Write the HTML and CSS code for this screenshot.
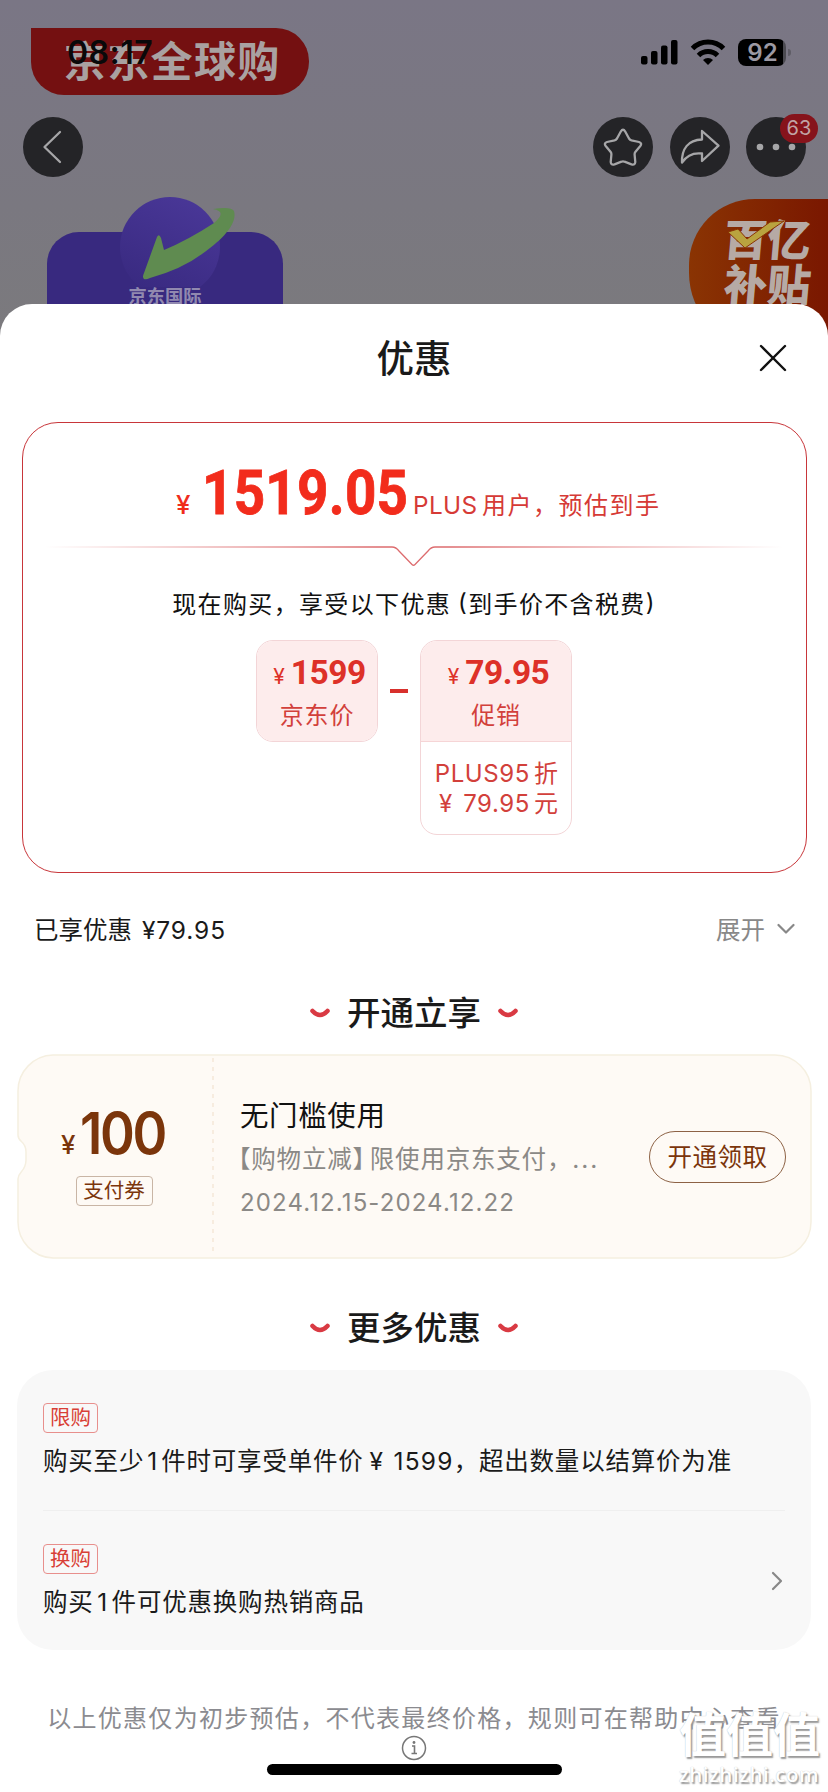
FILE: index.html
```html
<!DOCTYPE html>
<html lang="zh-CN">
<head>
<meta charset="utf-8">
<title>优惠</title>
<link rel="stylesheet" href="styles.css">
</head>
<body>
<div class="phone">
  <header class="hero">
    <div class="brand"><span>京东全球购</span></div>
    <div class="status">
      <span class="time">08:17</span>
      <div class="status-icons">
        <svg width="37" height="26" viewBox="0 0 37 26"><rect x="0" y="17" width="6.5" height="8.5" rx="2"/><rect x="10" y="12" width="6.5" height="13.5" rx="2"/><rect x="20" y="6.500" width="6.500" height="19" rx="2"/><rect x="30" y="1" width="6.500" height="24.500" rx="2"/></svg>
        <svg width="36" height="26" viewBox="0 0 36 26" fill="none" stroke="#000" stroke-width="5"><path d="M2.500 9.500a22 22 0 0 1 31 0"/><path d="M8.500 16.500a13.500 13.500 0 0 1 19 0"/><path d="M18 26l-5-5a7 7 0 0 1 10 0z" fill="#000" stroke="none"/></svg>
        <span class="battery">92</span>
      </div>
    </div>
    <nav class="nav">
      <span class="round"><svg width="60" height="60" viewBox="0 0 60 60"><path d="M37 15L21.500 30L37 45"/></svg></span>
      <span class="round push"><svg width="60" height="60" viewBox="0 0 60 60"><path d="M27.800 14.500Q30 11 32.200 14.500L36 21.500Q37 23 38.500 23.400L46 25Q49.500 26.200 47.300 29L42.300 35Q41.500 36 41.600 37.500L42.300 45Q42 48.500 38.500 47.300L31.500 44.700Q30 44 28.500 44.700L21.500 47.300Q18 48.500 17.700 45L18.400 37.500Q18.500 36 17.700 35L12.700 29Q10.500 26.200 14 25L21.500 23.400Q23 23 24 21.500Z"/></svg></span>
      <span class="round"><svg width="60" height="60" viewBox="0 0 60 60"><path d="M32 14L48.500 28.700L32 44V36.500C24 35.500 17 38 12 45.500C11.500 32 18 23 32 22.500Z"/></svg></span>
      <span class="round"><svg class="dots" width="60" height="60" viewBox="0 0 60 60"><circle cx="14" cy="30" r="3.300"/><circle cx="30" cy="30" r="3.300"/><circle cx="46" cy="30" r="3.300"/></svg><b class="count">63</b></span>
    </nav>
    <div class="promos">
      <div class="intl">
        <svg class="intl-logo" width="130" height="90" viewBox="0 0 130 90"><defs><linearGradient id="orb" x1=".7" y1="0" x2=".2" y2="1"><stop offset="0" stop-color="#493797"/><stop offset="1" stop-color="#38297f"/></linearGradient></defs><circle cx="50" cy="50" r="50" fill="url(#orb)"/><path d="M24 82Q22 80 24 76L37 40Q39 36 41 41L44 53Q68 43 94 26C102 19 104 14 93 12Q111 9 114 14C118 28 99 45 82 57Q62 72 30 81Q26 83 24 82Z" fill="#5f8b50"/></svg>
        <span>京东国际</span>
      </div>
      <div class="subsidy">
        <span>百亿</span><span>补贴</span>
        <svg class="tick" width="56" height="30" viewBox="0 0 56 30"><path d="M0 12L10 9L19 19L42 2L56 1L17 28Z" fill="#b9a33f" stroke="#8a3404"/></svg>
      </div>
    </div>
  </header>

  <main class="sheet">
    <div class="title-bar"><h1>优惠</h1>
      <svg class="close" width="28" height="28" viewBox="0 0 28 28"><path d="M2 2L26 26M26 2L2 26"/></svg>
    </div>

    <section class="price-card">
      <div class="price-line"><span class="yen">¥</span><strong><span>1519.05</span></strong><span class="plus">PLUS</span><span class="who">用户，预估到手</span></div>
      <svg class="notch" width="738" height="24" viewBox="0 0 738 24"><defs><linearGradient id="fade" gradientUnits="userSpaceOnUse" x1="0" y1="0" x2="738" y2="0"><stop offset="0" stop-color="#d4474a" stop-opacity="0"/><stop offset=".45" stop-color="#d4474a" stop-opacity=".8"/><stop offset=".55" stop-color="#d4474a" stop-opacity=".8"/><stop offset="1" stop-color="#d4474a" stop-opacity="0"/></linearGradient></defs><path d="M0 2H347Q351 2 354 6L367 19.500Q368.500 21 370 19.500L383 6Q386 2 390 2H738" fill="none" stroke="url(#fade)" stroke-width="1.300"/></svg>
      <p class="intro">现在购买，享受以下优惠<span class="paren">(</span>到手价不含税费<span>)</span></p>
      <div class="formula">
        <div class="chip base"><div class="chip-top"><p class="amount"><i>¥</i><b>1599</b></p><p class="label">京东价</p></div></div>
        <span class="minus"></span>
        <div class="chip promo">
          <div class="chip-top"><p class="amount"><i>¥</i><b>79.95</b></p><p class="label">促销</p></div>
          <div class="chip-more"><p>PLUS95<span class="cj">折</span></p><p><i>¥</i> 79.95<span class="cj">元</span></p></div>
        </div>
      </div>
    </section>

    <div class="enjoyed"><span>已享优惠 <span class="num">¥79.95</span></span><span class="expand">展开<svg width="18" height="12" viewBox="0 0 18 12"><path d="M1.500 2L9 9.500L16.500 2"/></svg></span></div>

    <h2 class="heading"><svg width="20" height="11" viewBox="0 0 20 11"><path d="M2.500 3Q10 11 17.500 3"/></svg><span>开通立享</span><svg width="20" height="11" viewBox="0 0 20 11"><path d="M2.500 3Q10 11 17.500 3"/></svg></h2>

    <section class="coupon">
      <svg class="coupon-bg" width="796" height="206" viewBox="0 0 796 206"><path d="M36 1H758A36 36 0 0 1 794 37V168A36 36 0 0 1 758 204H36A36 36 0 0 1 1 168V125C1 117 9 118 9 106V98C9 86 1 89 1 81V37A36 36 0 0 1 36 1Z" fill="#fefaf5" stroke="#f5efe0" stroke-width="1.500"/><path d="M196 4V202" stroke="#f5e8d8" stroke-width="1.500" stroke-dasharray="4 5"/></svg>
      <div class="value"><p><i>¥</i><b>100</b></p><span>支付券</span></div>
      <div class="detail">
        <h3>无门槛使用</h3>
        <p class="desc"><span class="bracket">【</span>购物立减】<span class="rest">限使用京东支付，</span><span class="ell">...</span></p>
        <p class="date">2024.12.15-2024.12.22</p>
      </div>
      <span class="claim">开通领取</span>
    </section>

    <h2 class="heading second"><svg width="20" height="11" viewBox="0 0 20 11"><path d="M2.500 3Q10 11 17.500 3"/></svg><span>更多优惠</span><svg width="20" height="11" viewBox="0 0 20 11"><path d="M2.500 3Q10 11 17.500 3"/></svg></h2>

    <section class="offers">
      <div class="offer"><span class="tag">限购</span><p>购买至少<span class="one">1</span>件时可享受单件价<span class="yy">¥</span> <span class="sum">1599</span>，超出数量以结算价为准</p></div>
      <div class="offer"><span class="tag">换购</span><p>购买<span class="one wide">1</span>件可优惠换购热销商品</p>
        <svg class="go" width="12" height="20" viewBox="0 0 12 20"><path d="M2 2L10 10L2 18"/></svg></div>
    </section>

    <footer class="foot">
      <p>以上优惠仅为初步预估，不代表最终价格，规则可在帮助中心查看</p>
      <svg width="26" height="26" viewBox="0 0 26 26"><circle cx="13" cy="13" r="11.500" fill="none" stroke="#777" stroke-width="1.500"/><path d="M11 11H13.500V18M10.500 18.500H16" fill="none" stroke="#777" stroke-width="1.600"/><circle cx="13" cy="7.500" r="1.400" fill="#777"/></svg>
      <div class="home"></div>
    </footer>
    <div class="mark"><span>值值值</span><small>zhizhizhi.com</small></div>
  </main>
</div>
</body>
</html>
```

FILE: styles.css
```css
* { box-sizing: border-box; margin: 0; padding: 0; }
i { font-style: normal; }
body { font-family: Inter, "Noto Sans CJK SC", sans-serif; color: #1a1a1a; background: #fff; }
.phone { position: relative; width: 828px; height: 1792px; overflow: hidden; }
svg { display: block; flex: none; }

/* dimmed product page */
.hero { position: relative; height: 345px; padding: 28px 0 0; background: linear-gradient(#7a7685, #7a7880 60%, #7b7a7d); }
.brand { width: 278px; height: 67px; margin-left: 31px; padding-left: 33px; border-radius: 0 33px 33px 33px; background: #741011; color: #a9a1a1; font: 700 42px/62px "Noto Sans CJK SC", sans-serif; letter-spacing: 1.3px; white-space: nowrap; }
.status { position: absolute; top: 33px; left: 67px; width: 725px; height: 38px; display: flex; align-items: center; justify-content: space-between; }
.time { font-size: 32px; font-weight: 600; color: #09090a; letter-spacing: .5px; }
.status-icons { display: flex; align-items: center; gap: 12px; }
.battery { position: relative; width: 48px; height: 27px; margin-right: 6px; padding-left: 1px; border-radius: 8px; background: linear-gradient(90deg, #000 45px, #4b4a50 45px); color: #9c99a3; font-size: 24px; font-weight: 600; line-height: 27px; text-align: center; }
.battery::after { content: ""; position: absolute; right: -5px; top: 10px; width: 3px; height: 7px; border-radius: 0 3px 3px 0; background: #5f5d66; }
.nav { display: flex; align-items: center; gap: 16.500px; margin: 22px 23px 0; }
.round { position: relative; width: 60px; height: 60px; border-radius: 50%; background: #242427; }
.round svg { fill: none; stroke: #a6a6a8; stroke-width: 2.300; stroke-linecap: round; stroke-linejoin: round; }
.round .dots { fill: #a6a6a8; stroke: none; }
.push { margin-left: auto; }
.count { position: absolute; left: 34px; top: -3px; width: 38px; height: 29px; border-radius: 15px; background: #86131b; color: #c1a3a5; font-size: 20px; font-weight: 400; line-height: 29px; text-align: center; }
.nav .round:last-child { margin-right: -1px; }
.promos { display: flex; justify-content: space-between; margin-top: 22px; padding-left: 47px; }
.intl { position: relative; width: 236px; height: 120px; margin-top: 33px; padding-top: 50px; border-radius: 32px; background: #38297f; text-align: center; color: #9189af; font: 700 18.300px/27px "Noto Sans CJK SC", sans-serif; }
.intl-logo { position: absolute; left: 73px; top: -35px; }
.subsidy { position: relative; width: 139px; height: 150px; padding: 16px 0 0 35px; border-radius: 66px 0 0 76px; background: linear-gradient(90deg, #8a3403, #7a1700); color: #b6aaa5; font: 900 43.500px/45px "Noto Sans CJK SC", sans-serif; }
.subsidy span { display: block; transform: skewX(-5deg); }
.tick { position: absolute; left: 39px; top: 21px; }

/* sheet */
.sheet { position: relative; height: 1488px; margin-top: -41px; border-radius: 32px 32px 0 0; background: #fff; font-size: 24.500px; }
.title-bar { position: relative; height: 118px; display: flex; justify-content: center; padding-top: 25px; }
h1 { font: 500 37.500px/54px "Noto Sans CJK SC", sans-serif; }
.close { position: absolute; left: 759px; top: 40px; stroke: #111; stroke-width: 2.400; stroke-linecap: round; }
.price-card { width: 785px; height: 451px; margin: 0 auto; border: 1.500px solid #c8363a; border-radius: 36px; display: flex; flex-direction: column; align-items: center; }
.price-line { display: flex; align-items: baseline; height: 105px; margin-top: 17px; width: 478px; white-space: nowrap; color: #d63a36; }
.price-line > * { flex: none; }
.price-line .yen { width: 27px; padding-left: 1px; font-size: 26px; font-weight: 500; color: #f02d1d; }
.price-line strong { width: 211px; font: 700 60.500px/107px Roboto, sans-serif; color: #f22c1c; }
.price-line strong span { display: inline-block; transform: scaleX(.905); transform-origin: left; letter-spacing: .3px; -webkit-text-stroke: .8px #f22c1c; }
.plus { width: 69px; font-size: 24.300px; letter-spacing: .4px; }
.who { font-size: 24px; letter-spacing: 1.500px; }
.intro { display: flex; height: 71px; padding-bottom: 5px; align-items: center; font-size: 24px; letter-spacing: 1.350px; color: #111; white-space: nowrap; }
.intro .paren { margin-left: 7px; }
.formula { display: flex; align-items: flex-start; color: #d2403b; }
.chip { border: 1.500px solid #f3d5d7; border-radius: 17px; overflow: hidden; text-align: center; }
.base { width: 122px; height: 102px; }
.promo { width: 152px; height: 195px; }
.chip-top { height: 101px; background: #fdecec; padding-top: 11px; }
.amount { height: 42px; display: flex; justify-content: center; align-items: baseline; gap: 6px; padding-left: 5px; line-height: 42px; color: #dd3128; }
.amount i { font-size: 21px; }
.amount b { font: 700 33.500px/42px Roboto, sans-serif; letter-spacing: -.5px; }
.label { line-height: 43px; font-size: 24px; letter-spacing: .8px; }
.minus { width: 18px; height: 4px; margin: 49px 12px 0; background: #d8302c; }
.promo .chip-top { border-bottom: 1.500px solid #f6d5d6; }
.chip-more { padding: 17px 13px 0; text-align: right; white-space: nowrap; line-height: 30px; font-size: 24px; }
.chip-more p { letter-spacing: .6px; }
.chip-more .cj { margin-left: 4px; letter-spacing: 0; }
.chip-more i { margin-right: 3px; }
.enjoyed { display: flex; justify-content: space-between; height: 113px; align-items: center; padding: 0 33px 2px 34px; }
.enjoyed .num { margin-left: 3px; letter-spacing: .9px; }
.expand { display: flex; align-items: center; gap: 12px; color: #888; }
.expand svg, .go { fill: none; stroke: #888; stroke-width: 2.200; stroke-linecap: round; stroke-linejoin: round; }
.heading { height: 69px; margin-top: -1px; display: flex; justify-content: center; padding-top: 1px; gap: 17px; font: 500 33.500px/50px "Noto Sans CJK SC", sans-serif; }
.heading svg { margin-top: 22px; fill: none; stroke: #d93a43; stroke-width: 4.500; stroke-linecap: round; }

.coupon { position: relative; width: 796px; height: 206px; margin-left: 17px; display: flex; }
.coupon-bg { position: absolute; left: 0; top: 0; }
.value { position: relative; width: 194px; display: flex; flex-direction: column; align-items: center; color: #7b350b; padding: 45px 0 0; }
.value p { width: 106px; display: flex; align-items: baseline; gap: 5px; line-height: 68px; height: 77px; }
.value i { font-size: 26px; font-weight: 500; }
.value b { font-size: 58px; font-weight: 600; letter-spacing: -2.500px; transform: scaleX(.91); transform-origin: left; }
.value span { width: 77px; height: 30px; border: 1px solid #c9b5a5; border-radius: 4px; font-size: 20.500px; line-height: 28px; text-align: center; }
.detail { position: relative; flex: 1; padding: 38px 0 0 29px; white-space: nowrap; color: #8b8986; }
h3 { font: 400 28.500px/44px "Noto Sans CJK SC", sans-serif; letter-spacing: .6px; color: #111; }
.desc { line-height: 47px; font-size: 24.500px; letter-spacing: .8px; }
.bracket { margin-left: -14px; }
.rest { margin-left: -8px; }
.ell { letter-spacing: 2px; }
.date { font-size: 24px; line-height: 39px; letter-spacing: 1.120px; }
.claim { position: relative; width: 137px; height: 52px; margin: 77px 27px 0 0; border: 1.500px solid #8d6245; border-radius: 27px; color: #7b350b; font-size: 24.500px; line-height: 50px; letter-spacing: .5px; text-align: center; }
.second { margin-top: 40px; height: 70px; padding-top: 1px; }

.offers { width: 794px; height: 280px; margin-left: 17px; padding: 0 26px; border-radius: 36px; background: #f8f8f8; }
.offer { position: relative; height: 141px; padding-top: 33px; }
.offer + .offer { margin-top: -1px; border-top: 1px solid #efefef; }
.tag { display: block; width: 55px; height: 30px; border: 1.500px solid #e88f8c; border-radius: 4px; color: #d83f36; font-size: 20.500px; line-height: 28px; text-align: center; }
.offer p { margin-top: 8px; line-height: 40px; font-size: 24.500px; letter-spacing: .8px; white-space: nowrap; }
.one { display: inline-block; width: 17px; text-align: center; }
.wide { width: 18px; }
.yy { margin-left: 6px; }
.sum { margin-left: 2px; letter-spacing: 1.200px; }
.go { position: absolute; left: 728px; top: 60px; }

.foot { display: flex; flex-direction: column; align-items: center; padding-top: 49px; }
.foot p { line-height: 40px; font-size: 24px; letter-spacing: 1.300px; color: #8b8b90; white-space: nowrap; }
.foot svg { margin-top: -4px; }
.home { width: 295px; height: 11px; margin-top: 3px; border-radius: 6px; background: #000; }
.mark { position: absolute; left: 679px; top: 1397px; width: 144px; color: #fff; text-shadow: 1.500px 1.500px 1.500px #999, 0 0 1px #bbb; white-space: nowrap; }
.mark span { display: block; font: 700 47px/62px "Noto Sans CJK SC", sans-serif; }
.mark small { display: block; font: 600 20.500px/22px "Open Sans", sans-serif; letter-spacing: .5px; }
```
